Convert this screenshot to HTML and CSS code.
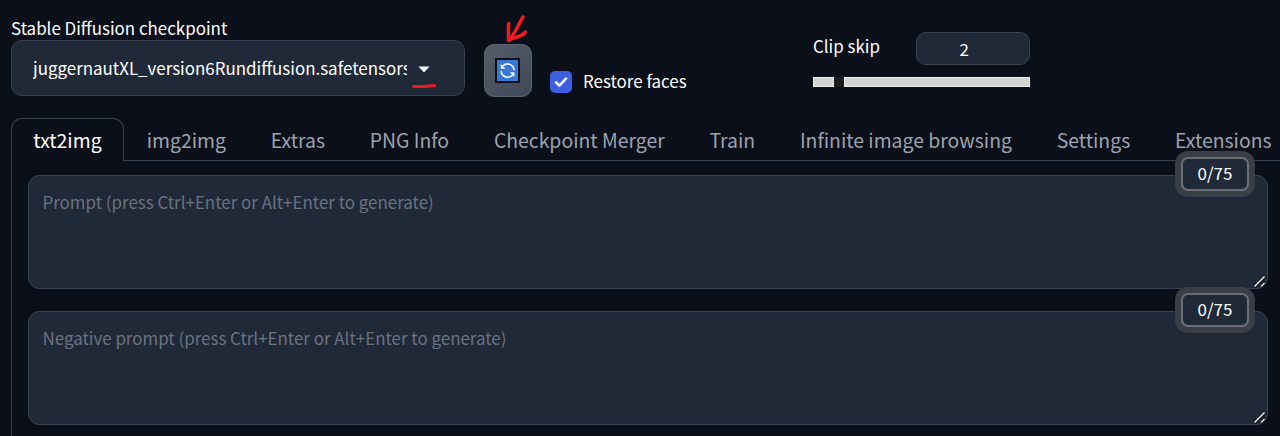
FILE: index.html
```html
<!DOCTYPE html>
<html lang="en">
<head>
<meta charset="utf-8">
<title>Stable Diffusion</title>
<link rel="stylesheet" href="styles.css">
</head>
<body>
<header class="quicksettings">
  <div class="checkpoint">
    <div class="label">Stable Diffusion checkpoint</div>
    <div class="select">
      <span class="select-value">juggernautXL_version6Rundiffusion.safetensors</span>
      <svg class="caret" width="12" height="7" viewBox="0 0 12 7"><path d="M.5.5h11L6 6.5z" fill="#fff"/></svg>
      <svg class="underline" width="25" height="6" viewBox="0 0 25 6"><path d="M1.500 3.500C8 3.700 16 3.600 22.500 2.500" fill="none" stroke="#ed1c24" stroke-width="3" stroke-linecap="round"/></svg>
    </div>
  </div>
  <div class="refresh">
    <svg width="25" height="25" viewBox="0 0 25 25">
      <path d="M0 0h25v25H0z" fill="#0b0f19"/>
      <path d="M2 2h21v21H2z" fill="#3977d5"/>
      <g fill="none" stroke="#eef7ff" stroke-width="1.700">
        <path d="M7.500 8.300A6.500 6.500 0 0 1 19 12"/>
        <path d="M17.800 16.700A6.500 6.500 0 0 1 6.200 13"/>
      </g>
      <path d="M5.700 6v4.800h4.800zM19.500 19v-4.800h-4.800z" fill="#eef7ff"/>
    </svg>
    <svg class="arrow" width="24" height="30" viewBox="0 0 24 30"><path d="M18 3C13 11 10 20 3.500 26.500C3.700 20 3 16 3.700 9.500M3.500 26.500C9 22.500 15 24.500 20.500 18" fill="none" stroke="#ed1c24" stroke-width="3.500" stroke-linecap="round" stroke-linejoin="round"/></svg>
  </div>
  <div class="restore">
    <span class="checkbox"><svg width="22" height="22" viewBox="0 0 22 22"><path d="M6 11.300l3.400 3.300L16 7.700" fill="none" stroke="#fff" stroke-width="2.600" stroke-linecap="round" stroke-linejoin="round"/></svg></span>
    <span>Restore faces</span>
  </div>
  <div class="clip">
    <div class="clip-head"><span>Clip skip</span><span class="number">2</span></div>
    <div class="slider"><span class="track-start"></span><span class="thumb"></span><span class="track-end"></span></div>
  </div>
</header>
<nav class="tabs">
  <span class="tab active">txt2img</span>
  <span class="tab">img2img</span>
  <span class="tab">Extras</span>
  <span class="tab">PNG Info</span>
  <span class="tab">Checkpoint Merger</span>
  <span class="tab">Train</span>
  <span class="tab">Infinite image browsing</span>
  <span class="tab">Settings</span>
  <span class="tab">Extensions</span>
</nav>
<main class="panel">
  <div class="prompt">
    <span class="hint">Prompt (press Ctrl+Enter or Alt+Enter to generate)</span>
    <span class="counter">0/75</span>
    <svg class="grip" width="13" height="13" viewBox="0 0 13 13"><path d="M1.500 11.500l10-10M8 11.500L11.500 8" stroke="#080b12" stroke-width="3.500"/><path d="M1.500 11.500l10-10M8 11.500L11.500 8" stroke="#e6e6e6" stroke-width="1.700"/></svg>
  </div>
  <div class="prompt">
    <span class="hint">Negative prompt (press Ctrl+Enter or Alt+Enter to generate)</span>
    <span class="counter">0/75</span>
    <svg class="grip" width="13" height="13" viewBox="0 0 13 13"><path d="M1.500 11.500l10-10M8 11.500L11.500 8" stroke="#080b12" stroke-width="3.500"/><path d="M1.500 11.500l10-10M8 11.500L11.500 8" stroke="#e6e6e6" stroke-width="1.700"/></svg>
  </div>
</main>
</body>
</html>
```
FILE: styles.css
```css
* { box-sizing: border-box; }
body {
  margin: 0;
  height: 436px;
  overflow: hidden;
  background: #0b0f19;
  color: #fff;
  font: 16.93px/24px "Noto Sans CJK SC", "Noto Sans", sans-serif;
  white-space: nowrap;
}
svg { display: block; }
.quicksettings { display: flex; height: 118px; padding-left: 11px; }
.checkpoint { width: 454px; padding-top: 16px; }
.select {
  position: relative;
  display: flex;
  align-items: center;
  height: 56px;
  padding-left: 21px;
  border: 1px solid #374151;
  border-radius: 11px;
  background: #1f2937;
}
.select-value { width: 374px; overflow: hidden; }
.caret { margin: 2px 0 0 11px; }
.underline { position: absolute; left: 400px; top: 42px; }
.refresh {
  position: relative;
  display: flex;
  align-items: center;
  justify-content: center;
  width: 48px;
  height: 53px;
  margin: 44px 0 0 19px;
  border: 1px solid #5b6471;
  border-radius: 10px;
  background: linear-gradient(135deg, #535c69, #404957);
}
.arrow { position: absolute; left: 20px; top: -31px; }
.refresh > svg:first-child { margin: -1px 1px 0 0; }
.restore { display: flex; align-items: center; gap: 11px; height: 24px; margin: 70px 0 0 18px; }
.restore > span:last-child { margin-top: -2px; }
.checkbox { width: 22px; height: 22px; border-radius: 5px; background: #3b5fe0; }
.clip { width: 217px; margin: 32px 0 0 auto; margin-right: 250px; }
.clip-head { display: flex; justify-content: space-between; height: 33px; line-height: 27px; }
.number {
  width: 114px;
  border: 1px solid #374151;
  border-radius: 10px;
  background: #1f2937;
  line-height: 31px;
  padding-left: 42.500px;
}
.slider { display: flex; height: 10px; margin-top: 12px; }
.track-start, .track-end { border: 1px solid #efefea; background: #d3d3cf; }
.track-start { width: 21px; }
.thumb { width: 10px; background: #1c1c1c; }
.track-end { flex: 1; }
.tabs { display: flex; height: 43px; padding-left: 11px; font-size: 19.4px; line-height: 43px; color: #9ca3af; }
.tab { flex: none; padding: 0 22.4px; border-bottom: 1px solid #374151; }
.tab.active {
  padding: 0 21.800px 0 21.200px;
  border: 1px solid #374151;
  border-bottom: 0;
  border-radius: 11px 11px 0 0;
  color: #fff;
  line-height: 41px;
}
.panel {
  display: flex;
  flex-direction: column;
  gap: 22px;
  height: 275px;
  margin-left: 11px;
  padding: 14px 12px 0 16px;
  border-left: 1px solid #374151;
}
.prompt {
  position: relative;
  flex: none;
  height: 114px;
  padding: 14px 13.500px;
  border: 1px solid #374151;
  border-radius: 11px;
  background: #1f2937;
  color: #6b7280;
}
.counter {
  position: absolute;
  right: 18px;
  top: -19px;
  width: 68px;
  height: 34px;
  border: 2px solid #6c7075;
  border-radius: 7px;
  box-shadow: 0 0 0 6px #393e47;
  background: #1f2937;
  color: #fff;
  line-height: 28px;
  text-align: center;
}
.grip { position: absolute; right: 1px; bottom: 0; }
```
